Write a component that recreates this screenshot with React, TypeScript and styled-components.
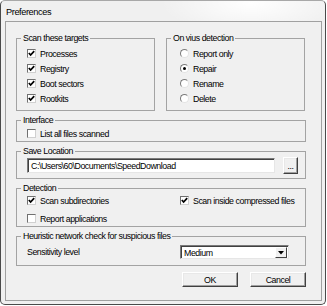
import React from "react";
import styled, { createGlobalStyle } from "styled-components";

const Global = createGlobalStyle`
  html, body { margin: 0; padding: 0; background: #ffffff; }
  body {
    font-family: "Liberation Sans", Arial, sans-serif;
    font-size: 8.8px;
    letter-spacing: -0.45px;
    color: #000;
  }
  * { box-sizing: border-box; }
`;

const Window = styled.div`
  width: 326px;
  height: 305px;
  border: 1px solid #4a4a4a;
  border-top-color: #a8a8a8;
  border-radius: 5px;
  background:
    radial-gradient(ellipse 90px 30px at 250px 2px, #ffffff 0%, rgba(255,255,255,0) 100%),
    #f0f0f0;
  display: flex;
  flex-direction: column;
  padding: 0 3px 3px 4px;
`;

const TitleBar = styled.div`
  height: 20px;
  display: flex;
  align-items: center;
  padding-left: 1px;
  padding-top: 1px;
  font-size: 9.2px;
  letter-spacing: -0.4px;
`;

const Panel = styled.div`
  flex: 1;
  border: 1px solid #a0a0a0;
  background: #f0f0f0;
  padding: 10px 15px 0 10px;
  display: flex;
  flex-direction: column;
  gap: 3px;
`;

const TopRow = styled.div`
  display: flex;
  gap: 11px;
`;

const Group = styled.fieldset<{ $w?: number }>`
  margin: 0;
  padding: 0;
  min-width: 0;
  border: 1px solid #a3a3a3;
  ${(p) => (p.$w ? `width: ${p.$w}px;` : "")}
`;

const Legend = styled.legend`
  margin-left: 4px;
  padding: 0 2px;
  line-height: 12px;
`;

const GroupBody = styled.div<{ $pl: number; $pt: number; $pb: number; $gap?: number }>`
  display: flex;
  flex-direction: column;
  gap: ${(p) => p.$gap ?? 0}px;
  padding: ${(p) => p.$pt}px 6px ${(p) => p.$pb}px ${(p) => p.$pl}px;
`;

const TwoCol = styled.div<{ $h: number }>`
  display: grid;
  grid-template-columns: 153px 1fr;
  align-items: center;
  height: ${(p) => p.$h}px;
`;

const Row = styled.label<{ $h: number }>`
  display: flex;
  align-items: center;
  gap: 4px;
  height: ${(p) => p.$h}px;
  white-space: nowrap;
`;

const Box = styled.span`
  width: 9px;
  height: 9px;
  flex: none;
  background: #fff;
  border: 1px solid;
  border-color: #707070 #d0d0d0 #d0d0d0 #707070;
  display: flex;
  align-items: center;
  justify-content: center;
`;

const Round = styled.span`
  width: 9px;
  height: 9px;
  flex: none;
  border-radius: 50%;
  background: #fff;
  border: 1px solid;
  border-color: #7a7a7a #e4e4e4 #e4e4e4 #7a7a7a;
  display: flex;
  align-items: center;
  justify-content: center;
`;

const Dot = styled.span`
  width: 3px;
  height: 3px;
  border-radius: 50%;
  background: #000;
`;

const Check = ({ on }: { on: boolean }) => (
  <Box>
    {on && (
      <svg width="7" height="7" viewBox="0 0 7 7">
        <polyline points="0.8,3 2.6,5 6.2,1.2" fill="none" stroke="#000" strokeWidth="1.7" />
      </svg>
    )}
  </Box>
);

const Radio = ({ on }: { on: boolean }) => <Round>{on && <Dot />}</Round>;

const PathRow = styled.div`
  display: flex;
  align-items: center;
  gap: 8px;
  height: 17px;
`;

const TextField = styled.div`
  width: 248px;
  height: 15px;
  background: #fff;
  border: 1px solid;
  border-color: #7a7a7a #e6e6e6 #e6e6e6 #7a7a7a;
  box-shadow: inset 1px 1px 0 #404040;
  padding: 0 0 0 3px;
  display: flex;
  align-items: center;
  white-space: nowrap;
  overflow: hidden;
`;

const RaisedButton = styled.div<{ $w: number; $h: number }>`
  width: ${(p) => p.$w}px;
  height: ${(p) => p.$h}px;
  background: #f0f0f0;
  border: 1px solid;
  border-color: #ffffff #404040 #404040 #ffffff;
  box-shadow: inset -1px -1px 0 #a0a0a0, inset 1px 1px 0 #e8e8e8;
  display: flex;
  align-items: center;
  justify-content: center;
`;

const Select = styled.div`
  width: 109px;
  height: 14px;
  background: #fff;
  border: 1px solid;
  border-color: #7a7a7a #e6e6e6 #e6e6e6 #7a7a7a;
  box-shadow: inset 1px 1px 0 #404040;
  display: flex;
  align-items: stretch;
  padding: 1px 1px 0 1px;
`;

const SelectText = styled.div`
  flex: 1;
  padding-left: 2px;
  display: flex;
  align-items: center;
`;

const ArrowButton = styled.div`
  width: 12px;
  background: #f0f0f0;
  border: 1px solid;
  border-color: #ffffff #404040 #404040 #ffffff;
  display: flex;
  align-items: center;
  justify-content: center;
`;

const Buttons = styled.div`
  display: flex;
  justify-content: flex-end;
  gap: 12px;
  margin-top: 3px;
`;

export default function App() {
  return (
    <>
      <Global />
      <Window>
        <TitleBar>Preferences</TitleBar>
        <Panel>
          <TopRow>
            <Group $w={139}>
              <Legend>Scan these targets</Legend>
              <GroupBody $pl={10} $pt={2} $pb={4}>
                <Row $h={15}><Check on />Processes</Row>
                <Row $h={15}><Check on />Registry</Row>
                <Row $h={15}><Check on />Boot sectors</Row>
                <Row $h={15}><Check on />Rootkits</Row>
              </GroupBody>
            </Group>
            <Group $w={139}>
              <Legend>On vius detection</Legend>
              <GroupBody $pl={13} $pt={2} $pb={4}>
                <Row $h={15}><Radio on={false} />Report only</Row>
                <Row $h={15}><Radio on />Repair</Row>
                <Row $h={15}><Radio on={false} />Rename</Row>
                <Row $h={15}><Radio on={false} />Delete</Row>
              </GroupBody>
            </Group>
          </TopRow>
          <Group>
            <Legend>Interface</Legend>
            <GroupBody $pl={10} $pt={0} $pb={0}>
              <Row $h={15}><Check on={false} />List all files scanned</Row>
            </GroupBody>
          </Group>
          <Group>
            <Legend>Save Location</Legend>
            <GroupBody $pl={10} $pt={0} $pb={4}>
              <PathRow>
                <TextField>C:\Users\60\Documents\SpeedDownload</TextField>
                <RaisedButton $w={15} $h={17}>...</RaisedButton>
              </PathRow>
            </GroupBody>
          </Group>
          <Group>
            <Legend>Detection</Legend>
            <GroupBody $pl={10} $pt={0} $pb={1} $gap={5}>
              <TwoCol $h={13}>
                <Row $h={13}><Check on />Scan subdirectories</Row>
                <Row $h={13}><Check on />Scan inside compressed files</Row>
              </TwoCol>
              <TwoCol $h={13}>
                <Row $h={13}><Check on={false} />Report applications</Row>
              </TwoCol>
            </GroupBody>
          </Group>
          <Group>
            <Legend>Heuristic network check for suspicious files</Legend>
            <GroupBody $pl={10} $pt={3} $pb={6}>
              <TwoCol $h={14}>
                <span>Sensitivity level</span>
                <Select>
                  <SelectText>Medium</SelectText>
                  <ArrowButton>
                    <svg width="6" height="4" viewBox="0 0 6 4">
                      <polygon points="0,0 6,0 3,3.5" fill="#000" />
                    </svg>
                  </ArrowButton>
                </Select>
              </TwoCol>
            </GroupBody>
          </Group>
          <Buttons>
            <RaisedButton $w={56} $h={15}>OK</RaisedButton>
            <RaisedButton $w={56} $h={15}>Cancel</RaisedButton>
          </Buttons>
        </Panel>
      </Window>
    </>
  );
}
